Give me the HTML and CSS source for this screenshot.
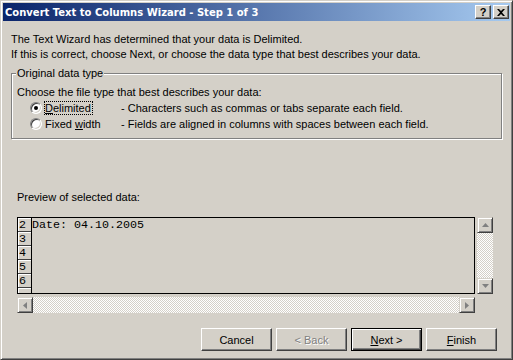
FILE: index.html
```html
<!DOCTYPE html>
<html lang="en">
<head>
  <meta charset="UTF-8">
  <title>Convert Text to Columns Wizard</title>
  <link rel="stylesheet" href="styles.css">
</head>
<body>

  <div class="window">
    <div class="titlebar">
      <span class="title">Convert Text to Columns Wizard - Step 1 of 3</span>
      <button class="caption-btn help">?</button>
      <button class="caption-btn close">
        <svg width="8" height="7" viewBox="0 0 8 7"><path d="M0 0h2l2 2 2-2h2L5 3.5 8 7H6L4 5 2 7H0l3-3.5z" fill="#000"/></svg>
      </button>
    </div>

    <div class="content">
      <p class="intro">The Text Wizard has determined that your data is Delimited.<br>If this is correct, choose Next, or choose the data type that best describes your data.</p>

      <fieldset class="group">
        <legend>Original data type</legend>
        <p class="choose">Choose the file type that best describes your data:</p>
        <div class="option">
          <span class="radio checked"></span>
          <span class="opt-col"><span class="opt-label focused"><span class="key">D</span>elimited</span></span>
          <span class="opt-desc">- Characters such as commas or tabs separate each field.</span>
        </div>
        <div class="option">
          <span class="radio"></span>
          <span class="opt-col"><span class="opt-label">Fixed <span class="key">w</span>idth</span></span>
          <span class="opt-desc">- Fields are aligned in columns with spaces between each field.</span>
        </div>
      </fieldset>

      <p class="preview-label">Preview of selected data:</p>

      <div class="preview">
        <div class="preview-box">
          <div class="rownums">
            <div class="rownum">2</div>
            <div class="rownum">3</div>
            <div class="rownum">4</div>
            <div class="rownum">5</div>
            <div class="rownum">6</div>
            <div class="rownum"></div>
          </div>
          <div class="data">Date: 04.10.2005</div>
        </div>
        <div class="vscroll">
          <span class="sb-btn"><svg width="7" height="4" viewBox="0 0 7 4"><path d="M3.5 0L7 4H0z" fill="#808080"/></svg></span>
          <span class="track"></span>
          <span class="sb-btn"><svg width="7" height="4" viewBox="0 0 7 4"><path d="M0 0h7L3.5 4z" fill="#808080"/></svg></span>
        </div>
        <div class="hscroll">
          <span class="sb-btn"><svg width="4" height="7" viewBox="0 0 4 7"><path d="M0 3.5L4 0v7z" fill="#808080"/></svg></span>
          <span class="track"></span>
          <span class="sb-btn"><svg width="4" height="7" viewBox="0 0 4 7"><path d="M0 0l4 3.5L0 7z" fill="#808080"/></svg></span>
        </div>
      </div>

      <div class="actions">
        <button class="btn">Cancel</button>
        <button class="btn" disabled>&lt; Back</button>
        <button class="btn default"><span class="key">N</span>ext &gt;</button>
        <button class="btn"><span class="key">F</span>inish</button>
      </div>
    </div>
  </div>

</body>
</html>
```

FILE: styles.css
```css
* { box-sizing: border-box; }

body {
  margin: 0;
  background: #d4d0c8;
  font-family: "Liberation Sans", Arial, sans-serif;
  font-size: 11px;
  color: #000;
}

.window {
  width: 513px;
  height: 360px;
  background: #d4d0c8;
  border: 1px solid;
  border-color: #d4d0c8 #404040 #404040 #d4d0c8;
  box-shadow: inset 1px 1px #fff, inset -1px -1px #808080;
  padding: 2px;
  display: flex;
  flex-direction: column;
}

.titlebar {
  height: 18px;
  background: linear-gradient(to right, #0a246a, #a6caf0);
  display: flex;
  align-items: center;
  padding: 0 1px 0 2px;
}

.title {
  flex: 1;
  color: #fff;
  font-family: "DejaVu Sans", sans-serif;
  font-weight: bold;
  font-size: 10px;
  white-space: nowrap;
}

.caption-btn {
  width: 16px;
  height: 14px;
  padding: 0;
  background: #d4d0c8;
  border: 1px solid;
  border-color: #fff #404040 #404040 #fff;
  box-shadow: inset -1px -1px #808080;
  display: flex;
  align-items: center;
  justify-content: center;
  font-family: "Liberation Sans", Arial, sans-serif;
  font-weight: bold;
  font-size: 11px;
  line-height: 12px;
}

.caption-btn.help { margin-right: 2px; }

.content {
  flex: 1;
  display: flex;
  flex-direction: column;
  padding: 11px 8px 0 8px;
}

.intro {
  margin: 0;
  line-height: 15px;
}

.group {
  margin: 5px 0 0 0;
  padding: 0 0 6px 5px;
  border: 1px solid #808080;
  box-shadow: inset 1px 1px #fff, 1px 1px #fff;
}

.group legend {
  padding: 0 1px;
  margin-left: -1px;
  line-height: 13px;
  background: #d4d0c8;
}

.choose {
  margin: 4px 0 0 0;
  line-height: 16px;
}

.option {
  display: flex;
  align-items: center;
  height: 16px;
}

.radio {
  width: 12px;
  height: 12px;
  margin-left: 13px;
  border-radius: 50%;
  background: #fff;
  border: 1px solid;
  border-color: #808080 #fff #fff #808080;
  box-shadow: inset 1px 1px #404040, inset -1px -1px #d4d0c8;
  display: flex;
  align-items: center;
  justify-content: center;
}

.radio.checked::after {
  content: "";
  width: 4px;
  height: 4px;
  border-radius: 50%;
  background: #000;
}

.opt-col {
  width: 77px;
  margin-left: 2px;
}

.opt-label {
  display: inline-block;
  line-height: 12px;
  padding: 0 1px 0 0;
  border: 1px solid transparent;
}

.opt-label.focused { border: 1px dotted #000; }

.key { text-decoration: underline; }

.preview-label {
  margin: 52px 0 0 6px;
  line-height: 13px;
}

.preview {
  margin: 13px 0 0 6px;
  display: grid;
  grid-template-columns: 458px 16px;
  column-gap: 2px;
  row-gap: 3px;
}

.preview-box {
  height: 77px;
  border: 1px solid #000;
  display: flex;
  overflow: hidden;
  font-family: "Liberation Mono", "Courier New", monospace;
  font-size: 11.67px;
}

.rownums {
  width: 14px;
  border-right: 1px solid #000;
}

.rownum {
  height: 14px;
  padding-left: 1px;
  line-height: 14px;
  border-bottom: 1px solid #404040;
  box-shadow: inset 1px 1px #fff;
}

.data {
  line-height: 14px;
  white-space: pre;
}

.vscroll, .hscroll {
  display: flex;
  background: repeating-conic-gradient(#fff 0 25%, #d4d0c8 0 50%) 0 0 / 2px 2px;
}

.vscroll { flex-direction: column; height: 77px; }
.hscroll { height: 16px; }

.track { flex: 1; }

.sb-btn {
  width: 16px;
  height: 16px;
  flex: none;
  background: #d4d0c8;
  border: 1px solid;
  border-color: #d4d0c8 #404040 #404040 #d4d0c8;
  box-shadow: inset 1px 1px #fff, inset -1px -1px #808080;
  display: flex;
  align-items: center;
  justify-content: center;
}

.actions {
  margin-top: 15px;
  padding-right: 5px;
  display: flex;
  justify-content: flex-end;
  gap: 4px;
}

.btn {
  width: 71px;
  height: 23px;
  padding: 0;
  background: #d4d0c8;
  border: 1px solid;
  border-color: #fff #404040 #404040 #fff;
  box-shadow: inset -1px -1px #808080;
  font-family: "Liberation Sans", Arial, sans-serif;
  font-size: 11px;
  color: #000;
}

.btn:disabled {
  color: #808080;
  text-shadow: 1px 1px #fff;
}

.btn.default {
  border: 1px solid #000;
  box-shadow: inset 1px 1px #fff, inset -1px -1px #404040, inset -2px -2px #808080;
}
```
